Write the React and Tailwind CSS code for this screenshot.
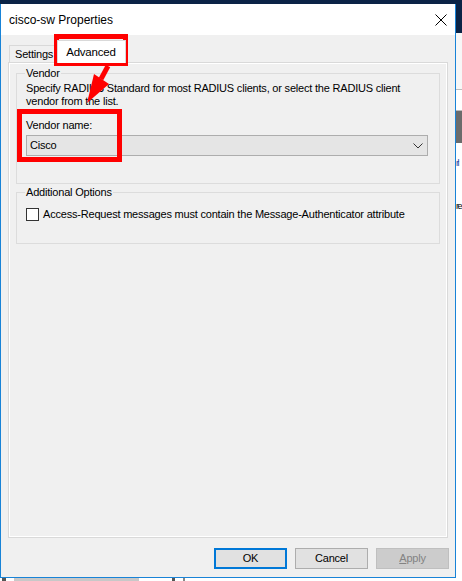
import React from 'react';

// Windows 10 property sheet, "Advanced" tab, with red call-out marks on top

function CloseIcon() {
  return (
    <svg width="12" height="12" viewBox="0 0 12 12" fill="none">
      <path d="M0.5 0.5 L11.5 11.5 M11.5 0.5 L0.5 11.5" stroke="#000" strokeWidth="1" />
    </svg>
  );
}

function Chevron() {
  return (
    <svg width="10" height="6" viewBox="0 0 10 6" fill="none">
      <path d="M0.5 0.5 L5 5 L9.5 0.5" stroke="#333" strokeWidth="1" />
    </svg>
  );
}

function GroupBox({ title, height, children }) {
  return (
    <div className={`border border-[#dcdcdc] pl-[9px] pr-[10px] ${height}`}>
      <span className="block w-fit -mt-[7px] -ml-[1px] px-[1px] bg-[#f0f0f0] leading-[13px]">{title}</span>
      {children}
    </div>
  );
}

export default function App() {
  return (
    <div
      className="relative w-[462px] h-[581px] overflow-hidden bg-[#0b2346] text-[11px] tracking-[-0.2px] text-black"
      style={{ fontFamily: '"Liberation Sans", Arial, sans-serif' }}
    >
      <div className="h-[4px]" />
      <div className="flex">
        {/* dialog */}
        <div className="w-[456px] border-x border-b border-[#1883d7] bg-[#f0f0f0]">
          <div className="h-[31px] bg-white flex items-center justify-between pl-[8px] pr-[8px]">
            <span className="text-[12px] tracking-normal">cisco-sw Properties</span>
            <CloseIcon />
          </div>

          <div className="h-[542px] pt-[5px] flex flex-col">
            {/* tabs */}
            <div className="ml-[8px] h-[22px] flex items-end">
              <div className="h-[17px] pl-[5px] pr-[3px] border border-b-0 border-[#d9d9d9] bg-[#f0f0f0] leading-[16px]">
                Settings
              </div>
              <div className="relative z-10 -mb-px h-[23px] pl-[8px] pr-[9px] border border-b-0 border-[#d9d9d9] bg-white leading-[22px] text-[11.5px]">
                Advanced
              </div>
            </div>

            {/* tab page */}
            <div className="mx-[7px] h-[476px] border border-[#d9d9d9] bg-white p-[1px]">
              <div className="h-full bg-[#f0f0f0] pt-[9px] pl-[6px] pr-[6px]">
                <GroupBox title="Vendor" height="h-[111px]">
                  <p className="mt-[2px] leading-[13px]">
                    Specify RADIUS Standard for most RADIUS clients, or select the RADIUS client vendor from the list.
                  </p>
                  <p className="mt-[11px] leading-[13px]">Vendor name:</p>
                  <div className="mt-[3px] h-[21px] w-[402px] border border-[#adadad] bg-[#e5e5e5] flex items-center justify-between pl-[3px] pr-[4px]">
                    <span>Cisco</span>
                    <Chevron />
                  </div>
                </GroupBox>

                <div className="h-[8px]" />

                <GroupBox title="Additional Options" height="h-[52px]">
                  <div className="mt-[9px] flex items-center gap-[4px]">
                    <div className="w-[13px] h-[13px] border border-[#333] bg-white" />
                    <span className="leading-[13px]">Access-Request messages must contain the Message-Authenticator attribute</span>
                  </div>
                </GroupBox>
              </div>
            </div>

            {/* buttons */}
            <div className="mt-[10px] h-[21px] flex justify-end gap-[8px] pr-[6px]">
              <button className="w-[73px] h-[21px] border-2 border-[#0078d7] bg-[#e1e1e1] text-[11px]">OK</button>
              <button className="w-[73px] h-[21px] border border-[#adadad] bg-[#e1e1e1] text-[11px]">Cancel</button>
              <button className="w-[73px] h-[21px] border border-[#bfbfbf] bg-[#cccccc] text-[#838383] text-[11px]">
                <span className="underline">A</span>pply
              </button>
            </div>
          </div>
        </div>

        {/* background window peeking out on the right */}
        <div className="w-[6px] flex flex-col">
          <div className="h-[29px] bg-[#0b2346]" />
          <div className="h-[57px] bg-[#f7f7f7] border-b border-[#bdbdbd]" />
          <div className="h-[21px] bg-white border-b border-[#bdbdbd]" />
          <div className="h-[32px] bg-[#6b6b6b]" />
          <div className="h-[53px] bg-white leading-[13px] pt-[14px]">
            <span className="block text-[9px] tracking-[-1.5px] text-[#1a3a9a]">rl</span>
          </div>
          <div className="flex-1 bg-white leading-[13px] pt-[4px]">
            <span className="block text-[9px] tracking-[-1.5px]">re</span>
          </div>
        </div>
      </div>

      {/* background scrollbar along the bottom */}
      <div className="h-[3px] bg-white flex items-center">
        <div className="w-[4px] h-[3px] ml-[2px] bg-[#555]" />
        <div className="w-[125px] h-[3px] ml-[8px] bg-[#c8c8c8]" />
        <div className="w-[3px] h-[3px] ml-[33px] bg-[#555]" />
        <div className="w-[2px] h-[3px] ml-[8px] bg-[#888]" />
      </div>

      {/* red annotations */}
      <div className="absolute left-[54px] top-[34px] w-[74px] h-[32px] border-[5px] border-[#ff0000]" />
      <div className="absolute left-[17px] top-[109px] w-[105px] h-[53px] border-[5px] border-[#ff0000]" />
      <svg className="absolute left-0 top-0" width="462" height="581" viewBox="0 0 462 581" fill="none">
        <path d="M108 66 L101 79" stroke="#ff0000" strokeWidth="5" />
        <polygon points="87,103 109,84 94,74" fill="#ff0000" />
      </svg>
    </div>
  );
}
